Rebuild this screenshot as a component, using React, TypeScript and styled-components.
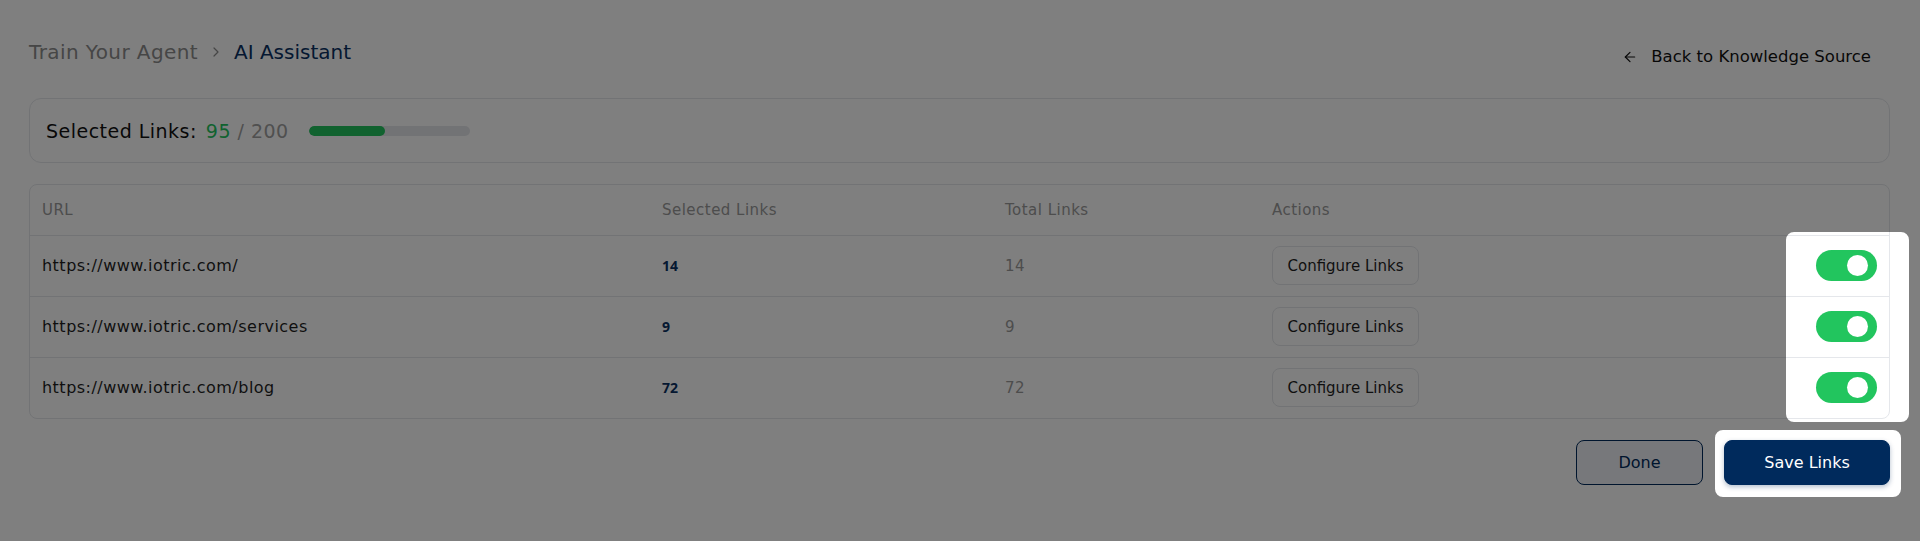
import React, { useLayoutEffect, useRef, useState } from "react";
import styled, { createGlobalStyle } from "styled-components";
import { ArrowLeft, ChevronRight } from "lucide-react";

const NAVY = "#002a5c";
const GREEN = "#22c55e";
const LINE = "#e5e7eb";

const GlobalStyle = createGlobalStyle`
  html, body {
    margin: 0;
    background: #ffffff;
    font-family: "DejaVu Sans", "Open Sans", sans-serif;
    letter-spacing: 0.03em;
    color: #1f1f1f;
  }
  * { box-sizing: border-box; }
`;

const rows = [
  { url: "https://www.iotric.com/", selected: 14, total: 14 },
  { url: "https://www.iotric.com/services", selected: 9, total: 9 },
  { url: "https://www.iotric.com/blog", selected: 72, total: 72 },
];

const Page = styled.div`
  display: flex;
  flex-direction: column;
  gap: 21px;
  padding: 37px 30px 0 29px;
  min-height: 541px;
`;

const Header = styled.div`
  display: flex;
  justify-content: space-between;
  align-items: flex-start;
  height: 40px;
`;

const Crumbs = styled.nav`
  display: flex;
  align-items: center;
  gap: 10px;
  font-size: 20px;
  line-height: 30px;
`;

const Crumb = styled.span<{ $current?: boolean }>`
  color: ${(p) => (p.$current ? "#0a3163" : "#8c8c8c")};
  letter-spacing: ${(p) => (p.$current ? "0" : "0.02em")};
`;

const CrumbSep = styled.span`
  display: flex;
  color: #8c8c8c;
`;

const BackLink = styled.button`
  display: flex;
  align-items: center;
  gap: 13px;
  padding: 8px 19px 8px 0;
  border: none;
  background: none;
  font: inherit;
  font-size: 16.5px;
  line-height: 24px;
  color: #111;
  cursor: pointer;
`;

const StatsCard = styled.div`
  display: flex;
  align-items: center;
  height: 65px;
  padding: 0 16px;
  border: 1px solid ${LINE};
  border-radius: 12px;
`;

const StatsLabel = styled.span`
  font-size: 19px;
  color: #111;
`;

const StatsCount = styled.span`
  margin-left: 9px;
  font-size: 19px;
  color: #a0a0a0;
`;

const StatsValue = styled.span`
  color: ${GREEN};
`;

const Progress = styled.div`
  width: 161px;
  height: 10px;
  margin-left: 20px;
  border-radius: 5px;
  background: ${LINE};
  overflow: hidden;
`;

const ProgressFill = styled.div`
  height: 100%;
  border-radius: 5px;
  background: ${GREEN};
`;

const TableWrap = styled.div`
  border: 1px solid ${LINE};
  border-radius: 8px;
  overflow: hidden;
`;

const Table = styled.table`
  width: 100%;
  border-collapse: collapse;
  table-layout: fixed;
`;

const Th = styled.th`
  height: 50px;
  padding: 0 12px;
  text-align: left;
  font-size: 15px;
  font-weight: 400;
  color: #9a9a9a;
  border-bottom: 1px solid ${LINE};
`;

const Tr = styled.tr`
  & + & td {
    border-top: 1px solid ${LINE};
  }
`;

const Td = styled.td<{ $align?: string }>`
  height: 61px;
  padding: 0 12px;
  text-align: ${(p) => p.$align || "left"};
  font-size: 16px;
  color: #1f1f1f;
`;

const SelectedCount = styled.span`
  font-family: "Open Sans", sans-serif;
  font-size: 14px;
  font-weight: 700;
  letter-spacing: 0;
  color: #0a3163;
`;

const TotalCount = styled.span`
  font-size: 15px;
  color: #9a9a9a;
`;

const ConfigureButton = styled.button`
  width: 147px;
  height: 39px;
  padding: 0;
  border: 1px solid ${LINE};
  border-radius: 8px;
  background: #fff;
  font: inherit;
  font-size: 15px;
  color: #1f1f1f;
  cursor: pointer;
`;

const Switch = styled.button<{ $on: boolean }>`
  position: relative;
  width: 61px;
  height: 31px;
  padding: 0;
  border: none;
  border-radius: 16px;
  background: ${(p) => (p.$on ? GREEN : "#d1d5db")};
  cursor: pointer;
  vertical-align: middle;

  &::after {
    content: "";
    position: absolute;
    top: 5px;
    left: ${(p) => (p.$on ? "31px" : "9px")};
    width: 21px;
    height: 21px;
    border-radius: 50%;
    background: #fff;
  }
`;

const Footer = styled.div`
  display: flex;
  justify-content: flex-end;
  gap: 21px;
`;

const ActionButton = styled.button<{ $primary?: boolean }>`
  width: ${(p) => (p.$primary ? "166px" : "127px")};
  height: 45px;
  border-radius: 8px;
  border: 1px solid ${NAVY};
  background: ${(p) => (p.$primary ? NAVY : "#eef1f6")};
  color: ${(p) => (p.$primary ? "#fff" : NAVY)};
  font: inherit;
  font-size: 16px;
  box-shadow: ${(p) => (p.$primary ? "0 2px 5px rgba(0, 42, 92, 0.3)" : "none")};
  cursor: pointer;
`;

const Scrim = styled.svg`
  position: fixed;
  inset: 0;
  width: 100vw;
  height: 100vh;
  pointer-events: none;
  z-index: 50;
`;

type Hole = { x: number; y: number; w: number; h: number };

const holePath = ({ x, y, w, h }: Hole, r = 8) =>
  `M${x + r} ${y} H${x + w - r} A${r} ${r} 0 0 1 ${x + w} ${y + r} V${y + h - r} ` +
  `A${r} ${r} 0 0 1 ${x + w - r} ${y + h} H${x + r} A${r} ${r} 0 0 1 ${x} ${y + h - r} ` +
  `V${y + r} A${r} ${r} 0 0 1 ${x + r} ${y} Z`;

const App = () => {
  const [enabled, setEnabled] = useState([true, true, true]);
  const [holes, setHoles] = useState<Hole[]>([]);
  const [size, setSize] = useState({ w: 1920, h: 541 });
  const firstToggleRef = useRef<HTMLTableCellElement>(null);
  const lastToggleRef = useRef<HTMLTableCellElement>(null);
  const saveRef = useRef<HTMLButtonElement>(null);

  useLayoutEffect(() => {
    // cut the tour highlights out of the dark scrim around the measured elements
    const measure = () => {
      const a = firstToggleRef.current?.getBoundingClientRect();
      const b = lastToggleRef.current?.getBoundingClientRect();
      const s = saveRef.current?.getBoundingClientRect();
      const next: Hole[] = [];
      if (a && b) {
        next.push({
          x: a.left - 10,
          y: a.top - 3,
          w: a.width + 30,
          h: b.bottom - a.top + 7,
        });
      }
      if (s) {
        next.push({ x: s.left - 9, y: s.top - 10, w: s.width + 20, h: s.height + 22 });
      }
      setHoles(next);
      setSize({ w: window.innerWidth, h: window.innerHeight });
    };
    measure();
    window.addEventListener("resize", measure);
    return () => window.removeEventListener("resize", measure);
  }, []);

  const selected = 95;
  const limit = 200;

  return (
    <>
      <GlobalStyle />
      <Page>
        <Header>
          <Crumbs>
            <Crumb>Train Your Agent</Crumb>
            <CrumbSep>
              <ChevronRight size={16} strokeWidth={1.8} />
            </CrumbSep>
            <Crumb $current>AI Assistant</Crumb>
          </Crumbs>
          <BackLink>
            <ArrowLeft size={16} strokeWidth={1.8} />
            Back to Knowledge Source
          </BackLink>
        </Header>

        <StatsCard>
          <StatsLabel>Selected Links:</StatsLabel>
          <StatsCount>
            <StatsValue>{selected}</StatsValue> / {limit}
          </StatsCount>
          <Progress>
            <ProgressFill style={{ width: `${(selected / limit) * 100}%` }} />
          </Progress>
        </StatsCard>

        <TableWrap>
          <Table>
            <colgroup>
              <col style={{ width: 620 }} />
              <col style={{ width: 343 }} />
              <col style={{ width: 267 }} />
              <col />
              <col style={{ width: 93 }} />
            </colgroup>
            <thead>
              <tr>
                <Th>URL</Th>
                <Th>Selected Links</Th>
                <Th>Total Links</Th>
                <Th>Actions</Th>
                <Th />
              </tr>
            </thead>
            <tbody>
              {rows.map((row, i) => (
                <Tr key={row.url}>
                  <Td>{row.url}</Td>
                  <Td>
                    <SelectedCount>{row.selected}</SelectedCount>
                  </Td>
                  <Td>
                    <TotalCount>{row.total}</TotalCount>
                  </Td>
                  <Td>
                    <ConfigureButton>Configure Links</ConfigureButton>
                  </Td>
                  <Td
                    $align="right"
                    ref={
                      i === 0 ? firstToggleRef : i === rows.length - 1 ? lastToggleRef : undefined
                    }
                  >
                    <Switch
                      $on={enabled[i]}
                      role="switch"
                      aria-checked={enabled[i]}
                      onClick={() =>
                        setEnabled((prev) => prev.map((v, j) => (j === i ? !v : v)))
                      }
                    />
                  </Td>
                </Tr>
              ))}
            </tbody>
          </Table>
        </TableWrap>

        <Footer>
          <ActionButton>Done</ActionButton>
          <ActionButton $primary ref={saveRef}>
            Save Links
          </ActionButton>
        </Footer>
      </Page>

      <Scrim viewBox={`0 0 ${size.w} ${size.h}`}>
        <path
          fillRule="evenodd"
          fill="rgba(0,0,0,0.5)"
          d={`M0 0 H${size.w} V${size.h} H0 Z ` + holes.map((h) => holePath(h)).join(" ")}
        />
      </Scrim>
    </>
  );
};

export default App;
